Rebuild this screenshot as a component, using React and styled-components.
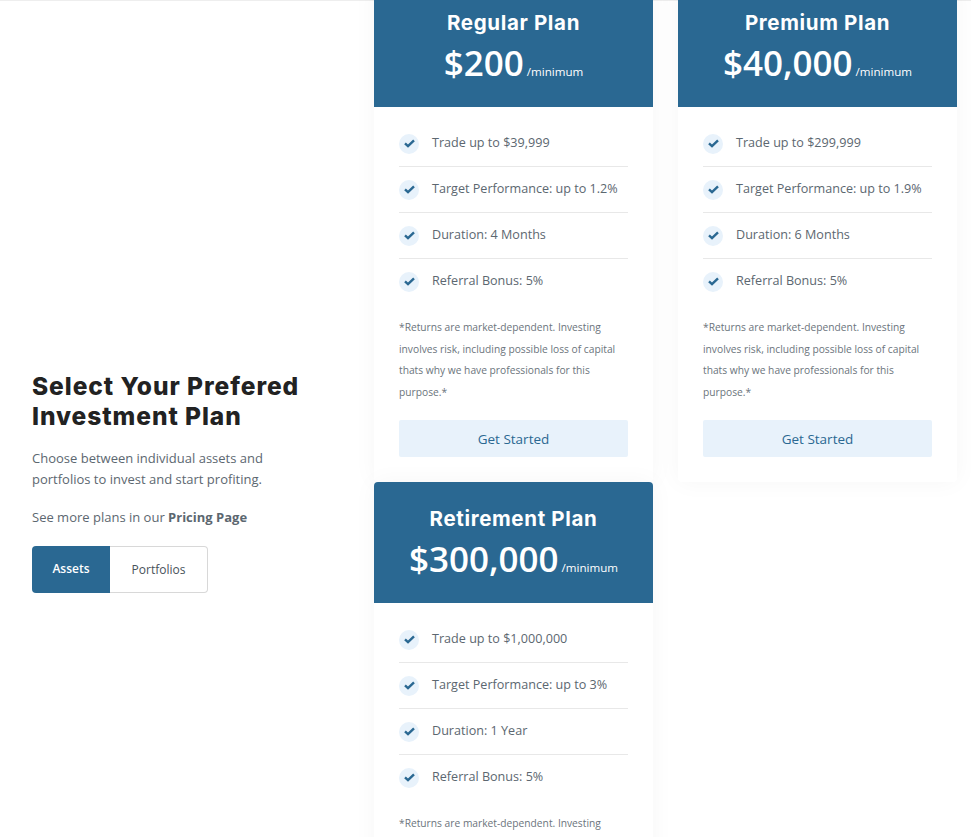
import styled, { createGlobalStyle } from "styled-components";

const plans = [
  {
    name: "Regular Plan",
    price: "$200",
    items: ["Trade up to $39,999", "Target Performance: up to 1.2%", "Duration: 4 Months", "Referral Bonus: 5%"],
  },
  {
    name: "Premium Plan",
    price: "$40,000",
    items: ["Trade up to $299,999", "Target Performance: up to 1.9%", "Duration: 6 Months", "Referral Bonus: 5%"],
  },
  {
    name: "Retirement Plan",
    price: "$300,000",
    items: ["Trade up to $1,000,000", "Target Performance: up to 3%", "Duration: 1 Year", "Referral Bonus: 5%"],
  },
];

const CheckIcon = () => (
  <svg width="11" height="9" viewBox="0 0 11 9" fill="none">
    <path d="M1 4.4L4 7.2L10 1.3" stroke="#2a6892" strokeWidth="2.4" />
  </svg>
);

const App = () => (
  <>
    <GlobalStyle />
    <Page>
      <TopLine />
      <Section>
        <Intro>
          <Heading>Select Your Prefered Investment Plan</Heading>
          <Lead>Choose between individual assets and portfolios to invest and start profiting.</Lead>
          <Lead>
            See more plans in our <strong>Pricing Page</strong>
          </Lead>
          <Toggle>
            <ToggleButton active>Assets</ToggleButton>
            <ToggleButton>Portfolios</ToggleButton>
          </Toggle>
        </Intro>
        <Plans>
          {plans.map((plan) => (
            <Card key={plan.name}>
              <CardHeader>
                <PlanName>{plan.name}</PlanName>
                <PriceRow>
                  <Price>{plan.price}</Price>
                  <PriceUnit>/minimum</PriceUnit>
                </PriceRow>
              </CardHeader>
              <CardBody>
                <Features>
                  {plan.items.map((item) => (
                    <Feature key={item}>
                      <CheckBadge>
                        <CheckIcon />
                      </CheckBadge>
                      <FeatureText>{item}</FeatureText>
                    </Feature>
                  ))}
                </Features>
                <Note>
                  *Returns are market-dependent. Investing involves risk, including possible loss of capital thats why
                  we have professionals for this purpose.*
                </Note>
                <StartButton>Get Started</StartButton>
              </CardBody>
            </Card>
          ))}
        </Plans>
      </Section>
    </Page>
  </>
);

export default App;

const GlobalStyle = createGlobalStyle`
  html, body {
    margin: 0;
    padding: 0;
    background: #fff;
    overflow: hidden;
  }
  * {
    box-sizing: border-box;
  }
`;

const Page = styled.div`
  position: relative;
  width: 971px;
  height: 837px;
  overflow: hidden;
  font-family: "Open Sans", sans-serif;
  color: #5c6770;
`;

const TopLine = styled.div`
  position: absolute;
  top: 0;
  left: 0;
  right: 0;
  height: 1px;
  background: #eeeeee;
`;

const Section = styled.div`
  position: relative;
  display: flex;
  margin-top: -14px;
  padding-left: 32px;
`;

const Intro = styled.div`
  width: 342px;
  flex: none;
  align-self: center;
  padding-right: 50px;
`;

const Heading = styled.h2`
  margin: 0 0 17px;
  font-family: Inter, sans-serif;
  font-size: 24.5px;
  line-height: 30px;
  font-weight: 800;
  letter-spacing: 0.95px;
  color: #222;
`;

const Lead = styled.p`
  margin: 0 0 17px;
  font-size: 13px;
  line-height: 21px;

  strong {
    font-weight: 700;
  }
`;

const Toggle = styled.div`
  display: flex;
  margin-top: 18px;
`;

const ToggleButton = styled.button`
  width: ${(props) => (props.active ? "78px" : "98px")};
  height: 47px;
  padding: 0 0 ${(props) => (props.active ? "2px" : "0")};
  font-family: "Open Sans", sans-serif;
  font-size: 12px;
  font-weight: ${(props) => (props.active ? 600 : 400)};
  color: ${(props) => (props.active ? "#fff" : "#48525a")};
  background: ${(props) => (props.active ? "#2a6892" : "#fff")};
  border: ${(props) => (props.active ? "none" : "1px solid #d8d8d8")};
  border-left: none;
  border-radius: ${(props) => (props.active ? "4px 0 0 4px" : "0 4px 4px 0")};
`;

const Plans = styled.div`
  display: grid;
  grid-template-columns: 279px 279px;
  grid-auto-rows: 496px;
  column-gap: 25px;
`;

const Card = styled.div`
  background: #fff;
  border-radius: 4px;
  box-shadow: 0 0 24px rgba(0, 0, 0, 0.04);
`;

const CardHeader = styled.div`
  height: 121px;
  padding-top: 23px;
  text-align: center;
  color: #fff;
  background: #2a6892;
  border-radius: 4px 4px 0 0;
`;

const PlanName = styled.div`
  font-family: Inter, sans-serif;
  font-size: 20.5px;
  line-height: 28px;
  font-weight: 700;
  letter-spacing: 0.65px;
`;

const PriceRow = styled.div`
  display: flex;
  justify-content: center;
  align-items: baseline;
  gap: 3px;
  margin-top: 3px;
`;

const Price = styled.span`
  font-size: 35px;
  line-height: 46px;
  font-weight: 600;
`;

const PriceUnit = styled.span`
  font-size: 11.6px;
`;

const CardBody = styled.div`
  padding: 14px 25px 0;
`;

const Features = styled.ul`
  margin: 0;
  padding: 0;
  list-style: none;
`;

const Feature = styled.li`
  display: flex;
  align-items: center;
  gap: 13px;
  height: 46px;
  font-size: 12.6px;
  border-bottom: 1px solid #e8e8e8;

  &:last-child {
    border-bottom-color: transparent;
  }
`;

const FeatureText = styled.span`
  padding-bottom: 3px;
`;

const CheckBadge = styled.span`
  display: flex;
  align-items: center;
  justify-content: center;
  width: 20px;
  height: 20px;
  border-radius: 50%;
  background: #e8f2fb;
`;

const Note = styled.p`
  margin: 12px 0 0;
  font-size: 10.24px;
  line-height: 21.6px;
  color: #6b747c;
`;

const StartButton = styled.button`
  display: block;
  width: 100%;
  height: 37px;
  margin-top: 17px;
  font-family: "Open Sans", sans-serif;
  font-size: 13.5px;
  color: #2a6892;
  background: #e8f2fb;
  border: none;
  border-radius: 2px;
`;
